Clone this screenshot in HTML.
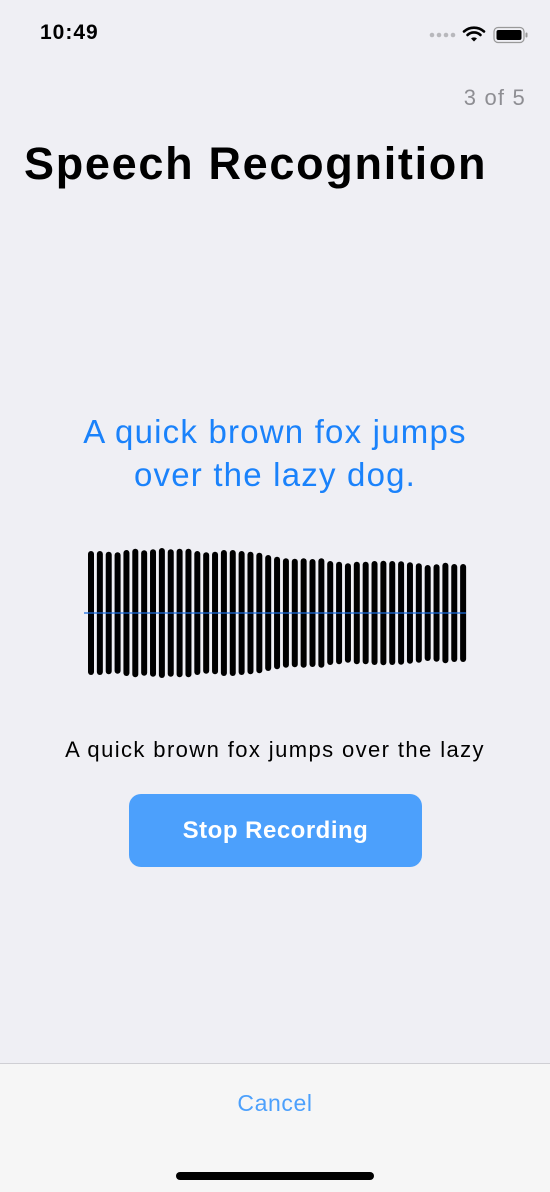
<!DOCTYPE html>
<html><head><meta charset="utf-8"><style>
body{margin:0;width:550px;height:1191px;background:#efeff4;font-family:"Liberation Sans",sans-serif;position:relative;overflow:hidden}
.abs{position:absolute}
</style></head><body>
<div class="abs" style="left:40px;top:21px;font-size:21px;font-weight:bold;color:#000;letter-spacing:1px">10:49</div>
<svg class="abs" style="left:428px;top:24px" width="110" height="22" viewBox="0 0 110 22">
<g fill="#b8b8bc"><circle cx="4" cy="11" r="2.3"/><circle cx="11" cy="11" r="2.3"/><circle cx="18" cy="11" r="2.3"/><circle cx="25" cy="11" r="2.3"/></g>
<path d="M36 7.5a15 15 0 0 1 20 0" stroke="#000" stroke-width="2.6" fill="none" stroke-linecap="round"/>
<path d="M39.5 11a9.5 9.5 0 0 1 13 0" stroke="#000" stroke-width="2.6" fill="none" stroke-linecap="round"/>
<path d="M43 14.5l3 3 3-3a4.5 4.5 0 0 0-6 0z" fill="#000"/>
<rect x="66" y="3.5" width="30" height="15" rx="4" fill="none" stroke="#999" stroke-width="1.2"/>
<rect x="68.5" y="6" width="25" height="10" rx="2" fill="#000"/>
<rect x="97.5" y="8.5" width="2" height="5" rx="1" fill="#999"/>
</svg>
<div class="abs" style="right:24px;top:85px;font-size:22px;color:#8e8e93;letter-spacing:1.2px">3 of 5</div>
<div class="abs" style="left:24px;top:138px;font-size:45px;font-weight:bold;color:#000;letter-spacing:1.7px;white-space:nowrap">Speech Recognition</div>
<div class="abs" style="left:0;width:550px;top:410px;text-align:center;font-size:33px;line-height:43px;color:#1a82fb;letter-spacing:1.2px">A quick brown fox jumps<br>over the lazy dog.</div>
<svg class="abs" style="left:0;top:0" width="550" height="700">
<g fill="#000" id="b"></g>
<line x1="84" y1="613" x2="466" y2="613" stroke="#1a6ee0" stroke-width="1.2"/>
</svg>
<div class="abs" style="left:0;width:550px;top:737px;text-align:center;font-size:22px;color:#000;letter-spacing:1.4px;white-space:nowrap">A quick brown fox jumps over the lazy</div>
<div class="abs" style="left:129px;top:794px;width:293px;height:73px;border-radius:12px;background:#4ca0fc;color:#fff;font-size:24px;font-weight:bold;text-align:center;line-height:73px;letter-spacing:0.5px">Stop Recording</div>
<div class="abs" style="left:0;top:1063px;width:550px;height:128px;background:#f6f6f6;border-top:1px solid #cfcfd4"></div>
<div class="abs" style="left:0;width:550px;top:1090px;text-align:center;font-size:23px;color:#4ca0fc;letter-spacing:0.6px">Cancel</div>
<div class="abs" style="left:176px;top:1172px;width:198px;height:8px;border-radius:4px;background:#000"></div>
<script>
var h=[62,62,61.3,60.7,63,64.3,62.7,63.7,65,63.7,64.3,64.3,62,60.7,61.3,63,63,62,61.3,60.3,58,56.3,54.7,54.3,54.7,54,54.7,52,51.3,49.7,51.3,51.3,52,52.3,52,51.7,50.7,49.7,48,48.7,50.3,49,49];
var s='';for(var i=0;i<h.length;i++){var x=88+i*8.86;s+='<rect x="'+x+'" y="'+(613-h[i])+'" width="6" height="'+(2*h[i])+'" rx="3"/>';}
document.getElementById('b').innerHTML=s;
</script>
</body></html>
